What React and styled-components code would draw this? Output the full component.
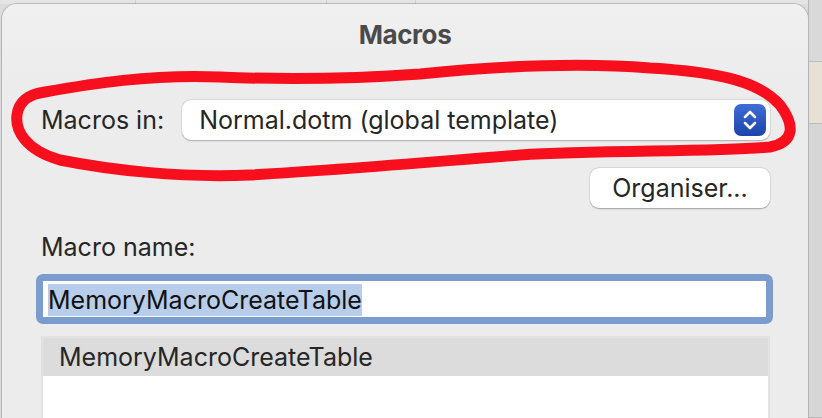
import React from "react";
import styled, { createGlobalStyle } from "styled-components";

const GlobalStyle = createGlobalStyle`
  html, body {
    margin: 0;
    padding: 0;
    background: #dcdcdc;
  }
  * {
    box-sizing: border-box;
  }
`;

function Stepper() {
  return (
    <StepperBox>
      <svg width="16" height="22" viewBox="0 0 16 22" fill="none">
        <path d="M3 8 L8 3 L13 8" stroke="#fff" strokeWidth="2.6" strokeLinecap="round" strokeLinejoin="round" />
        <path d="M3 14 L8 19 L13 14" stroke="#fff" strokeWidth="2.6" strokeLinecap="round" strokeLinejoin="round" />
      </svg>
    </StepperBox>
  );
}

function Scribble() {
  return (
    <Overlay viewBox="0 0 822 418" width="822" height="418">
      <path
        d="M 45 92
           C 90 84, 150 74, 220 77
           C 290 80, 350 79, 420 74
           C 500 66, 580 62, 650 68
           C 720 72, 760 82, 780 105
           C 795 125, 795 142, 770 147
           C 720 152, 600 150, 520 155
           C 430 162, 340 170, 250 175
           C 180 178, 110 170, 60 160
           C 25 150, 15 130, 17 115
           C 19 100, 30 94, 45 92"
        fill="none"
        stroke="#f80f1e"
        strokeWidth="11"
        strokeLinecap="round"
        strokeLinejoin="round"
      />
    </Overlay>
  );
}

export default function App() {
  return (
    <>
      <GlobalStyle />
      <Screen>
        <Main>
          <TopStrip />
          <Dialog>
            <Title>Macros</Title>
            <Body>
              <FieldRow>
                <Label>Macros in:</Label>
                <Select>
                  <span>Normal.dotm (global template)</span>
                  <Stepper />
                </Select>
              </FieldRow>
              <ButtonRow>
                <Button>Organiser...</Button>
              </ButtonRow>
              <NameLabel>Macro name:</NameLabel>
              <Input>
                <Selected>MemoryMacroCreateTable</Selected>
              </Input>
              <List>
                <Row selected>MemoryMacroCreateTable</Row>
              </List>
            </Body>
          </Dialog>
        </Main>
        <Side>
          <SideBlock $h={62} $bg="#d9d9d9" />
          <SideBlock $h={62} $bg="#e6e1d4" />
          <SideBlock $h={294} $bg="#d6d6d6" />
        </Side>
        <Scribble />
      </Screen>
    </>
  );
}

const Screen = styled.div`
  position: relative;
  display: flex;
  width: 822px;
  height: 418px;
  overflow: hidden;
  font-family: Inter, "Noto Sans", sans-serif;
  color: #262626;
`;

const Main = styled.div`
  display: flex;
  flex-direction: column;
  width: 808px;
`;

const TopStrip = styled.div`
  height: 4px;
  flex-shrink: 0;
  background:
    linear-gradient(#cfcfcf, #cfcfcf) 135px 0 / 1px 100% no-repeat,
    linear-gradient(#cfcfcf, #cfcfcf) 326px 0 / 1px 100% no-repeat,
    linear-gradient(#cfcfcf, #cfcfcf) 415px 0 / 1px 100% no-repeat,
    #e4e4e4;
`;

const Dialog = styled.div`
  flex: 1;
  margin-left: 2px;
  border-radius: 15px 15px 0 0;
  background: linear-gradient(#f0f0f0, #ececec 80px);
  box-shadow: 0 0 0 1px rgba(0, 0, 0, 0.18);
  display: flex;
  flex-direction: column;
`;

const Title = styled.div`
  height: 58px;
  flex-shrink: 0;
  display: flex;
  align-items: center;
  justify-content: center;
  padding-top: 2px;
  font-weight: 700;
  font-size: 26px;
  letter-spacing: -0.4px;
  color: #4a4a4a;
`;

const Body = styled.div`
  display: flex;
  flex-direction: column;
  padding: 0 38px 0 39px;
  font-size: 25px;
`;

const FieldRow = styled.div`
  display: flex;
  align-items: center;
  margin-top: 38px;
  gap: 18px;
`;

const Label = styled.span`
  white-space: nowrap;
`;

const Select = styled.div`
  flex: 1;
  height: 40px;
  display: flex;
  align-items: center;
  justify-content: space-between;
  padding: 0 4px 0 17px;
  background: #fff;
  border-radius: 9px;
  box-shadow: 0 0.5px 1.5px rgba(0, 0, 0, 0.25), 0 0 0 0.5px rgba(0, 0, 0, 0.06);
`;

const StepperBox = styled.div`
  width: 32px;
  height: 32px;
  border-radius: 7px;
  display: flex;
  align-items: center;
  justify-content: center;
  background: linear-gradient(#3f6dd6, #1b45aa);
`;

const ButtonRow = styled.div`
  display: flex;
  justify-content: flex-end;
  margin-top: 28px;
`;

const Button = styled.div`
  width: 180px;
  height: 40px;
  display: flex;
  align-items: center;
  justify-content: center;
  background: #fff;
  border-radius: 9px;
  box-shadow: 0 0.5px 1.5px rgba(0, 0, 0, 0.3), 0 0 0 0.5px rgba(0, 0, 0, 0.06);
`;

const NameLabel = styled.div`
  margin-top: 22px;
  line-height: 34px;
`;

const Input = styled.div`
  margin: 10px -3px 0 -5px;
  height: 50px;
  border: 7px solid #7b9ccd;
  border-radius: 7px;
  background: #fff;
  padding: 1px 0 0 5px;
  display: flex;
  align-items: center;
`;

const Selected = styled.span`
  background: #b8cdea;
  color: #111;
  line-height: 32px;
`;

const List = styled.div`
  margin-top: 12px;
  height: 120px;
  background: #fff;
  border: 2px solid #e2e2e2;
  border-bottom: none;
`;

const Row = styled.div`
  height: 38px;
  display: flex;
  align-items: center;
  padding-left: 16px;
  background: ${(p) => (p.selected ? "#dcdcdc" : "transparent")};
`;

const Side = styled.div`
  flex: 1;
  display: flex;
  flex-direction: column;
  border-left: 1px solid #b4b4b4;
`;

const SideBlock = styled.div`
  height: ${(p) => p.$h}px;
  background: ${(p) => p.$bg};
  border-bottom: 1px solid #bdbdbd;
`;

const Overlay = styled.svg`
  position: absolute;
  left: 0;
  top: 0;
  pointer-events: none;
`;
